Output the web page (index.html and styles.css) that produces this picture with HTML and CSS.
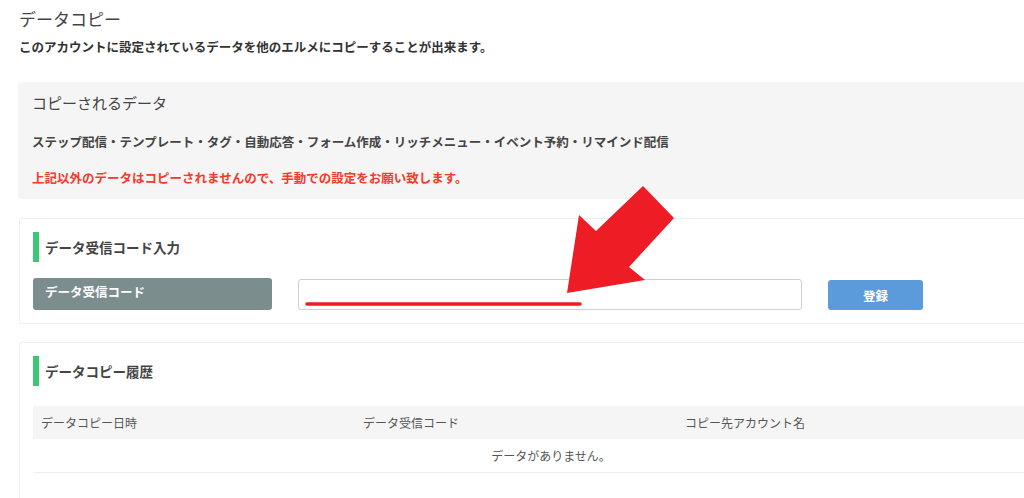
FILE: index.html
```html
<!DOCTYPE html>
<html lang="ja">
<head>
  <meta charset="UTF-8">
  <meta name="viewport" content="width=device-width, initial-scale=1.0">
  <title>データコピー</title>
  <link rel="stylesheet" href="styles.css">
</head>
<body>

  <div class="page">
    <h1>データコピー</h1>
    <p class="lead">このアカウントに設定されているデータを他のエルメにコピーすることが出来ます。</p>

    <div class="copy-box">
      <h2>コピーされるデータ</h2>
      <p class="copy-list">ステップ配信・テンプレート・タグ・自動応答・フォーム作成・リッチメニュー・イベント予約・リマインド配信</p>
      <p class="copy-note">上記以外のデータはコピーされませんので、手動での設定をお願い致します。</p>
    </div>

    <div class="card">
      <h3 class="card-title">データ受信コード入力</h3>
      <form class="code-form">
        <label class="code-label" for="code">データ受信コード</label>
        <input type="text" id="code" class="code-input">
        <button type="button" class="code-btn">登録</button>
      </form>
    </div>

    <div class="card card-history">
      <h3 class="card-title">データコピー履歴</h3>
      <table class="history">
        <thead>
          <tr>
            <th class="col-date">データコピー日時</th>
            <th class="col-code">データ受信コード</th>
            <th>コピー先アカウント名</th>
          </tr>
        </thead>
        <tbody>
          <tr>
            <td colspan="3" class="empty">データがありません。</td>
          </tr>
        </tbody>
      </table>
    </div>
  </div>

  <!-- annotation drawn over the screenshot -->
  <svg class="annotation" width="1024" height="498" viewBox="0 0 1024 498">
    <line x1="307" y1="304" x2="580" y2="304" stroke="#ee1c25" stroke-width="3.5" stroke-linecap="round"/>
    <polygon points="567,293 579,215 596,231 643,186 674,218 629,267 645,280" fill="#ee1c25"/>
  </svg>

</body>
</html>
```

FILE: styles.css
```css
html, body {
  overflow: hidden;
}

body {
  margin: 0;
  font-family: "Noto Sans CJK JP", "Noto Sans", sans-serif;
  color: #444;
  background-color: #fff;
}

.page {
  width: 1066px;
  padding: 7px 0 0 19px;
}

h1 {
  margin: 0;
  font-size: 17px;
  line-height: 24px;
  font-weight: normal;
  color: #444;
}

.lead {
  margin: 7px 0 0;
  font-size: 12.5px;
  line-height: 18px;
  font-weight: bold;
  color: #333;
}

.copy-box {
  margin: 26px 0 0 -1px;
  padding: 10px 14px 12px;
  background-color: #f5f5f5;
  border-radius: 4px;
}

.copy-box h2 {
  margin: 0;
  font-size: 15px;
  line-height: 22px;
  font-weight: normal;
  color: #444;
}

.copy-list {
  margin: 19px 0 0;
  font-size: 12.5px;
  line-height: 18px;
  font-weight: bold;
  color: #444;
}

.copy-note {
  margin: 18px 0 0;
  font-size: 12.5px;
  line-height: 18px;
  font-weight: bold;
  color: #f33a2c;
}

.card {
  margin-top: 19px;
  padding: 13px;
  border: 1px solid #eceef0;
  border-radius: 3px;
}

.card-history {
  margin-top: 18px;
  padding-bottom: 40px;
}

.card-title {
  display: flex;
  align-items: center;
  gap: 6px;
  height: 30px;
  margin: 0;
  font-size: 13.5px;
  font-weight: bold;
  color: #444;
}

.card-title::before {
  content: "";
  width: 6px;
  height: 30px;
  background-color: #3ec677;
}

.code-form {
  display: flex;
  align-items: flex-start;
  margin-top: 16px;
}

.code-label {
  width: 215px;
  height: 28px;
  padding: 4px 12px 0;
  line-height: 20px;
  font-size: 12.5px;
  font-weight: bold;
  color: #fff;
  background-color: #7c8d8e;
  border-radius: 3px;
}

.code-input {
  width: 504px;
  height: 31px;
  margin: 1px 0 0 26px;
  box-sizing: border-box;
  border: 1px solid #cfcfcf;
  border-radius: 3px;
  font-family: inherit;
}

.code-btn {
  width: 95px;
  height: 30px;
  margin: 2px 0 0 26px;
  border: none;
  border-radius: 3px;
  background-color: #5b9bdc;
  color: #fff;
  font-family: inherit;
  font-size: 12.5px;
  font-weight: bold;
}

.history {
  width: 1036px;
  margin-top: 20px;
  border-collapse: collapse;
  font-size: 12px;
  color: #555;
}

.history th {
  height: 33px;
  padding: 0 8px;
  text-align: left;
  font-weight: normal;
  background-color: #f5f5f5;
}

.history .col-date,
.history .col-code {
  width: 306px;
}

.history td {
  height: 33px;
  padding: 0 8px;
  border-bottom: 1px solid #eeeeee;
}

.history .empty {
  text-align: center;
}

.annotation {
  position: absolute;
  top: 0;
  left: 0;
  pointer-events: none;
}
```
